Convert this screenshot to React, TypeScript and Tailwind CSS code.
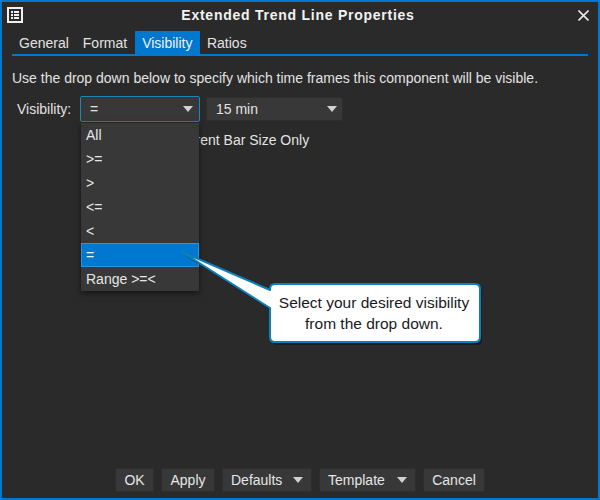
import { ReactNode } from 'react'

const tabs = ['General', 'Format', 'Visibility', 'Ratios']
const levels = ['All', '>=', '>', '<=', '<', '=', 'Range >=<']

const Caret = () => (
  <svg width="10" height="6" viewBox="0 0 10 6" className="shrink-0">
    <path d="M0 0H10L5 6Z" fill="#d0d0d0" />
  </svg>
)

const FootButton = ({ width, children, caret }: { width: string; children: ReactNode; caret?: boolean }) => (
  <div className={caret ? `${width} h-6 flex items-center justify-between pl-2 pr-2 rounded-[2px] bg-[#383838] border border-[#2e2e2e] text-[#e6e6e6]` : `${width} h-6 flex items-center justify-center rounded-[2px] bg-[#383838] border border-[#2e2e2e] text-[#e6e6e6]`}>
    <span>{children}</span>
    {caret && <Caret />}
  </div>
)

export default function App() {
  return (
    <div className="relative w-[600px] h-[500px] bg-[#2a2a2a] border-2 border-[#0078d0] overflow-hidden text-[14px] leading-4 text-[#e2e2e2] font-['Liberation_Sans',Arial,sans-serif] flex flex-col">
      {/* title bar */}
      <div className="h-[29px] flex items-center pl-[5px] pr-[9px] pb-[3px] shrink-0">
        <svg width="16" height="16" viewBox="0 0 16 16" className="shrink-0">
          <rect x="1" y="1" width="14" height="14" fill="none" stroke="#f0f0f0" strokeWidth="2" />
          <path d="M4 4h2v2H4zM7 4h5v2H7zM4 7h2v2H4zM7 7h5v2H7zM4 10h2v2H4zM7 10h5v2H7z" fill="#f0f0f0" />
        </svg>
        <div className="flex-1 text-center font-bold text-[#f2f2f2] tracking-[0.75px] pr-[5px]">Extended Trend Line Properties</div>
        <svg width="11" height="11" viewBox="0 0 11 11" className="shrink-0">
          <path d="M0.5 0.5L10.5 10.5M10.5 0.5L0.5 10.5" stroke="#e8e8e8" strokeWidth="1.6" />
        </svg>
      </div>

      {/* tabs */}
      <div className="mx-[10px] h-[25px] flex border-b-2 border-[#0078d0] shrink-0">
        {tabs.map((t) => (
          <div
            key={t}
            className={t === 'Visibility' ? 'h-[23px] pl-[7px] pr-[7.5px] ml-[1px] flex items-center bg-[#0078d0] text-[#f0f0f0]' : 'h-[23px] px-[7px] flex items-center text-[#e2e2e2]'}
          >
            {t}
          </div>
        ))}
      </div>

      {/* body */}
      <div className="flex-1 px-[10px] pt-[14px]">
        <p className="h-4">Use the drop down below to specify which time frames this component will be visible.</p>
        <div className="flex items-center mt-[10px] pl-[5px]">
          <span className="w-[63px]">Visibility:</span>
          <div className="w-[120px] h-[26px] flex items-center justify-between pl-[9px] pr-[6px] mr-[6px] rounded-[2px] bg-[#383838] border border-[#1b87b8]">
            <span>=</span>
            <Caret />
          </div>
          <div className="w-[137px] h-[24px] flex items-center justify-between pl-[9px] pr-[5px] rounded-[2px] bg-[#383838] border border-[#2e2e2e]">
            <span>15 min</span>
            <Caret />
          </div>
        </div>
        <div className="mt-[10px] pl-[161px] h-4 whitespace-nowrap">Current Bar Size Only</div>
      </div>

      {/* footer */}
      <div className="flex justify-center gap-[7px] pb-[6px] shrink-0">
        <FootButton width="w-[39px]">OK</FootButton>
        <FootButton width="w-[54px]">Apply</FootButton>
        <FootButton width="w-[90px]" caret>Defaults</FootButton>
        <FootButton width="w-[97px]" caret>Template</FootButton>
        <FootButton width="w-[62px]">Cancel</FootButton>
      </div>

      {/* open drop down */}
      <div className="absolute left-[79px] top-[121px] w-[118px] bg-[#383838] shadow-[0_2px_6px_rgba(0,0,0,0.55)]">
        {levels.map((l) => (
          <div
            key={l}
            className={l === '=' ? 'h-6 flex items-center pl-1 bg-[#0078d0] border border-[#2a94dc] text-[#f0f0f0]' : 'h-6 flex items-center pl-[5px] text-[#e6e6e6]'}
          >
            {l}
          </div>
        ))}
      </div>

      {/* callout */}
      <svg width="310" height="110" viewBox="0 0 310 110" className="absolute left-[178px] top-[246px]">
        <path
          d="M2 4L90 42V41Q90 36 95 36H295Q300 36 300 41V89Q300 94 295 94H95Q90 94 90 89V60Z"
          fill="#000"
          opacity="0.35"
          transform="translate(2 3)"
        />
        <path
          d="M2 4L90 42V41Q90 36 95 36H295Q300 36 300 41V89Q300 94 295 94H95Q90 94 90 89V60Z"
          fill="#fff"
          stroke="#0f7fb8"
          strokeWidth="2"
          strokeLinejoin="round"
        />
      </svg>
      <div className="absolute left-[267px] top-[281px] w-[210px] h-[60px] flex flex-col items-center justify-center text-[15.5px] text-[#1a1a24] leading-[21px]">
        <span>Select your desired visibility</span>
        <span>from the drop down.</span>
      </div>
    </div>
  )
}
